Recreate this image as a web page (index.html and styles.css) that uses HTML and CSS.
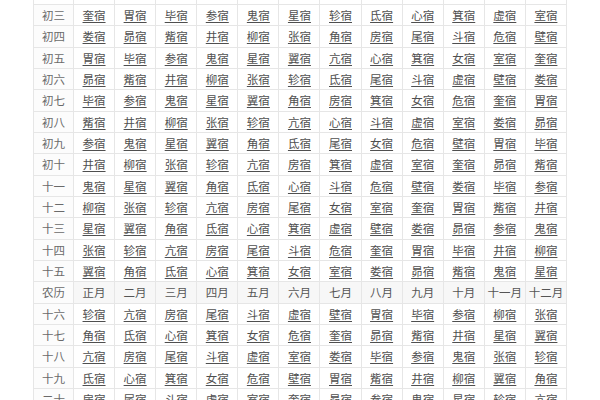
FILE: index.html
```html
<!DOCTYPE html>
<html lang="zh">
<head>
<meta charset="utf-8">
<title>二十七宿表</title>
<link rel="stylesheet" href="styles.css">
</head>
<body>
<div class="page">
<table class="xiu">
<colgroup><col class="c-label"><col span="12" class="c-m"></colgroup>
<tbody>
<tr class="cut"><td></td><td></td><td></td><td></td><td></td><td></td><td></td><td></td><td></td><td></td><td></td><td></td><td></td></tr>
<tr><td class="lb">初三</td><td><a>奎宿</a></td><td><a>胃宿</a></td><td><a>毕宿</a></td><td><a>参宿</a></td><td><a>鬼宿</a></td><td><a>星宿</a></td><td><a>轸宿</a></td><td><a>氐宿</a></td><td><a>心宿</a></td><td><a>箕宿</a></td><td><a>虚宿</a></td><td><a>室宿</a></td></tr>
<tr><td class="lb">初四</td><td><a>娄宿</a></td><td><a>昴宿</a></td><td><a>觜宿</a></td><td><a>井宿</a></td><td><a>柳宿</a></td><td><a>张宿</a></td><td><a>角宿</a></td><td><a>房宿</a></td><td><a>尾宿</a></td><td><a>斗宿</a></td><td><a>危宿</a></td><td><a>壁宿</a></td></tr>
<tr><td class="lb">初五</td><td><a>胃宿</a></td><td><a>毕宿</a></td><td><a>参宿</a></td><td><a>鬼宿</a></td><td><a>星宿</a></td><td><a>翼宿</a></td><td><a>亢宿</a></td><td><a>心宿</a></td><td><a>箕宿</a></td><td><a>女宿</a></td><td><a>室宿</a></td><td><a>奎宿</a></td></tr>
<tr><td class="lb">初六</td><td><a>昴宿</a></td><td><a>觜宿</a></td><td><a>井宿</a></td><td><a>柳宿</a></td><td><a>张宿</a></td><td><a>轸宿</a></td><td><a>氐宿</a></td><td><a>尾宿</a></td><td><a>斗宿</a></td><td><a>虚宿</a></td><td><a>壁宿</a></td><td><a>娄宿</a></td></tr>
<tr><td class="lb">初七</td><td><a>毕宿</a></td><td><a>参宿</a></td><td><a>鬼宿</a></td><td><a>星宿</a></td><td><a>翼宿</a></td><td><a>角宿</a></td><td><a>房宿</a></td><td><a>箕宿</a></td><td><a>女宿</a></td><td><a>危宿</a></td><td><a>奎宿</a></td><td><a>胃宿</a></td></tr>
<tr><td class="lb">初八</td><td><a>觜宿</a></td><td><a>井宿</a></td><td><a>柳宿</a></td><td><a>张宿</a></td><td><a>轸宿</a></td><td><a>亢宿</a></td><td><a>心宿</a></td><td><a>斗宿</a></td><td><a>虚宿</a></td><td><a>室宿</a></td><td><a>娄宿</a></td><td><a>昴宿</a></td></tr>
<tr><td class="lb">初九</td><td><a>参宿</a></td><td><a>鬼宿</a></td><td><a>星宿</a></td><td><a>翼宿</a></td><td><a>角宿</a></td><td><a>氐宿</a></td><td><a>尾宿</a></td><td><a>女宿</a></td><td><a>危宿</a></td><td><a>壁宿</a></td><td><a>胃宿</a></td><td><a>毕宿</a></td></tr>
<tr><td class="lb">初十</td><td><a>井宿</a></td><td><a>柳宿</a></td><td><a>张宿</a></td><td><a>轸宿</a></td><td><a>亢宿</a></td><td><a>房宿</a></td><td><a>箕宿</a></td><td><a>虚宿</a></td><td><a>室宿</a></td><td><a>奎宿</a></td><td><a>昴宿</a></td><td><a>觜宿</a></td></tr>
<tr><td class="lb">十一</td><td><a>鬼宿</a></td><td><a>星宿</a></td><td><a>翼宿</a></td><td><a>角宿</a></td><td><a>氐宿</a></td><td><a>心宿</a></td><td><a>斗宿</a></td><td><a>危宿</a></td><td><a>壁宿</a></td><td><a>娄宿</a></td><td><a>毕宿</a></td><td><a>参宿</a></td></tr>
<tr><td class="lb">十二</td><td><a>柳宿</a></td><td><a>张宿</a></td><td><a>轸宿</a></td><td><a>亢宿</a></td><td><a>房宿</a></td><td><a>尾宿</a></td><td><a>女宿</a></td><td><a>室宿</a></td><td><a>奎宿</a></td><td><a>胃宿</a></td><td><a>觜宿</a></td><td><a>井宿</a></td></tr>
<tr><td class="lb">十三</td><td><a>星宿</a></td><td><a>翼宿</a></td><td><a>角宿</a></td><td><a>氐宿</a></td><td><a>心宿</a></td><td><a>箕宿</a></td><td><a>虚宿</a></td><td><a>壁宿</a></td><td><a>娄宿</a></td><td><a>昴宿</a></td><td><a>参宿</a></td><td><a>鬼宿</a></td></tr>
<tr><td class="lb">十四</td><td><a>张宿</a></td><td><a>轸宿</a></td><td><a>亢宿</a></td><td><a>房宿</a></td><td><a>尾宿</a></td><td><a>斗宿</a></td><td><a>危宿</a></td><td><a>奎宿</a></td><td><a>胃宿</a></td><td><a>毕宿</a></td><td><a>井宿</a></td><td><a>柳宿</a></td></tr>
<tr><td class="lb">十五</td><td><a>翼宿</a></td><td><a>角宿</a></td><td><a>氐宿</a></td><td><a>心宿</a></td><td><a>箕宿</a></td><td><a>女宿</a></td><td><a>室宿</a></td><td><a>娄宿</a></td><td><a>昴宿</a></td><td><a>觜宿</a></td><td><a>鬼宿</a></td><td><a>星宿</a></td></tr>
<tr class="months"><td class="lb">农历</td><td>正月</td><td>二月</td><td>三月</td><td>四月</td><td>五月</td><td>六月</td><td>七月</td><td>八月</td><td>九月</td><td>十月</td><td>十一月</td><td>十二月</td></tr>
<tr><td class="lb">十六</td><td><a>轸宿</a></td><td><a>亢宿</a></td><td><a>房宿</a></td><td><a>尾宿</a></td><td><a>斗宿</a></td><td><a>虚宿</a></td><td><a>壁宿</a></td><td><a>胃宿</a></td><td><a>毕宿</a></td><td><a>参宿</a></td><td><a>柳宿</a></td><td><a>张宿</a></td></tr>
<tr><td class="lb">十七</td><td><a>角宿</a></td><td><a>氐宿</a></td><td><a>心宿</a></td><td><a>箕宿</a></td><td><a>女宿</a></td><td><a>危宿</a></td><td><a>奎宿</a></td><td><a>昴宿</a></td><td><a>觜宿</a></td><td><a>井宿</a></td><td><a>星宿</a></td><td><a>翼宿</a></td></tr>
<tr><td class="lb">十八</td><td><a>亢宿</a></td><td><a>房宿</a></td><td><a>尾宿</a></td><td><a>斗宿</a></td><td><a>虚宿</a></td><td><a>室宿</a></td><td><a>娄宿</a></td><td><a>毕宿</a></td><td><a>参宿</a></td><td><a>鬼宿</a></td><td><a>张宿</a></td><td><a>轸宿</a></td></tr>
<tr><td class="lb">十九</td><td><a>氐宿</a></td><td><a>心宿</a></td><td><a>箕宿</a></td><td><a>女宿</a></td><td><a>危宿</a></td><td><a>壁宿</a></td><td><a>胃宿</a></td><td><a>觜宿</a></td><td><a>井宿</a></td><td><a>柳宿</a></td><td><a>翼宿</a></td><td><a>角宿</a></td></tr>
<tr><td class="lb">二十</td><td><a>房宿</a></td><td><a>尾宿</a></td><td><a>斗宿</a></td><td><a>虚宿</a></td><td><a>室宿</a></td><td><a>奎宿</a></td><td><a>昴宿</a></td><td><a>参宿</a></td><td><a>鬼宿</a></td><td><a>星宿</a></td><td><a>轸宿</a></td><td><a>亢宿</a></td></tr>
</tbody>
</table>
</div>
</body>
</html>
```
FILE: styles.css
```css
html, body {
  margin: 0;
  padding: 0;
  background: #ffffff;
  overflow: hidden;
}
body {
  font-family: "Noto Sans CJK SC", "Noto Sans", sans-serif;
}
.page {
  padding-left: 33px;
}
.xiu {
  width: 534px;
  table-layout: fixed;
  border-collapse: collapse;
  font-size: 11.5px;
  color: #555;
}
.c-label {
  width: 40px;
}
.xiu td {
  height: 20.33px;
  padding: 0;
  border: 1px solid #e6e6e6;
  text-align: center;
  vertical-align: middle;
  line-height: 14px;
  white-space: nowrap;
}
.xiu tr.cut td {
  height: 4px;
  line-height: 0;
  border-top: 0;
}
.xiu td.lb {
  color: #6a6a6a;
  background: #fcfcfc;
}
.xiu a {
  color: #4f4f4f;
  text-decoration: underline;
  text-underline-offset: 2px;
  text-decoration-thickness: 1px;
}
.months td {
  background: #f7f7f7;
  color: #555;
}
```
